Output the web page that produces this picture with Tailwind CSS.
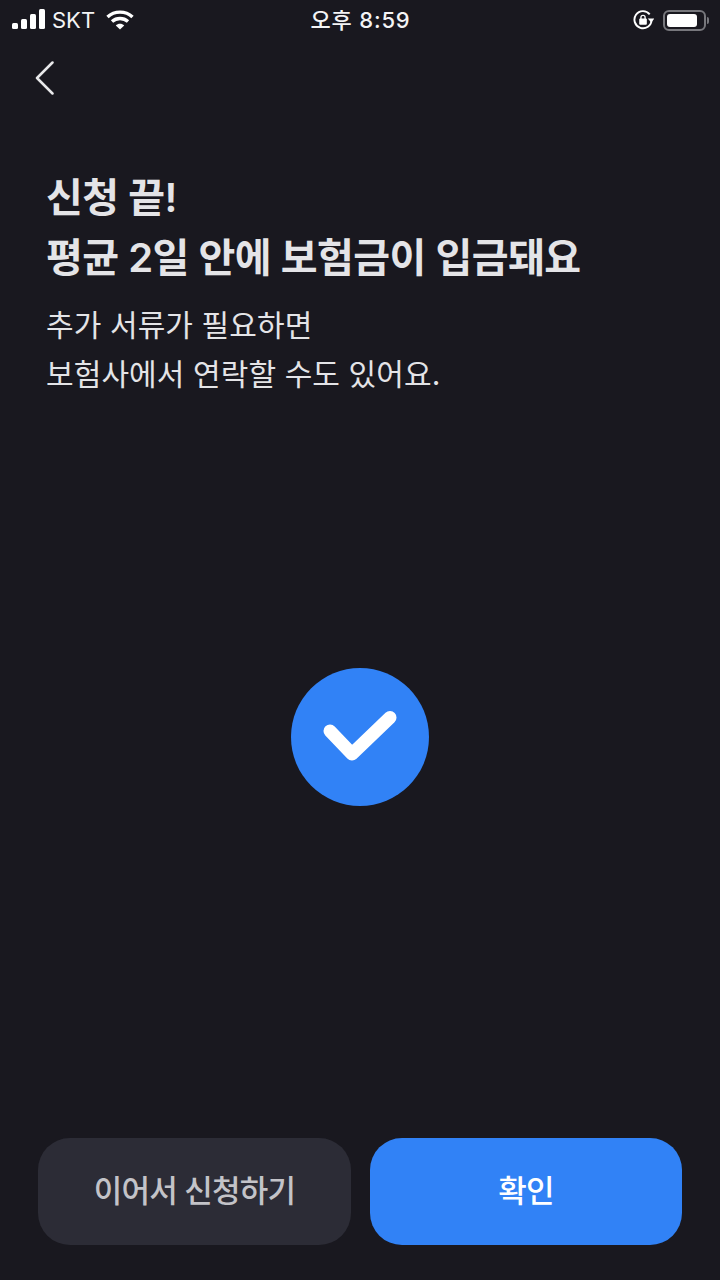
<!DOCTYPE html>
<html lang="ko">
<head>
    <meta charset="UTF-8">
    <meta name="viewport" content="width=device-width, initial-scale=1.0">
    <title>신청 끝</title>
    <script src="https://cdn.jsdelivr.net/npm/@tailwindcss/browser@4"></script>
</head>
<body class="bg-[#19181f] font-['Inter','Noto_Sans_CJK_KR',sans-serif]">
    <div class="w-[720px] h-[1280px] flex flex-col overflow-hidden">
        <!-- status bar -->
        <div class="h-[40px] shrink-0 grid grid-cols-3 items-center pl-[12px] pr-[11px] text-[#f4f4f5]">
            <div class="flex items-center">
                <svg width="33" height="22" viewBox="0 0 33 22" fill="#fff"><rect x="0" y="14" width="6" height="6" rx="1.5"/><rect x="9" y="10" width="6" height="10" rx="1.5"/><rect x="18" y="5" width="6" height="15" rx="1.5"/><rect x="27" y="0" width="6" height="20" rx="1.5"/></svg>
                <span class="ml-[7px] text-[22px] leading-none">SKT</span>
                <svg class="ml-[11px]" width="28" height="22" viewBox="0 0 28 22" fill="none" stroke="#fff" stroke-width="3.4"><path d="M1.5 8C8.500 1.500 19.500 1.500 26.500 8"/><path d="M6 12.500C10.500 8.500 17.500 8.500 22 12.500"/><path d="M14 20.500L9.800 16.400C12 14.300 16 14.300 18.200 16.400Z" fill="#fff" stroke="none"/></svg>
            </div>
            <div class="text-center text-[22px] font-medium leading-none tracking-[0.8px]">오후 8:59</div>
            <div class="flex items-center justify-end">
                <svg width="21" height="20" viewBox="0 0 22 21" fill="none"><path d="M17.500 4.500A9 9 0 1 0 19.500 10.500" stroke="#fff" stroke-width="2"/><path d="M15.500 9H22.500L19 13Z" fill="#fff"/><rect x="6.500" y="9" width="8" height="6.500" rx="1" fill="#fff"/><path d="M8.300 9.500V7.800a2.200 2.200 0 0 1 4.400 0V9.500" stroke="#fff" stroke-width="1.400"/></svg>
                <div class="ml-[9px] w-[43px] h-[21px] rounded-[6px] border-2 border-[#77777c] p-[2px]">
                    <div class="w-[30px] h-full rounded-[3px] bg-white"></div>
                </div>
                <div class="ml-[1px] w-[2px] h-[7px] rounded-r-full bg-[#77777c]"></div>
            </div>
        </div>

        <!-- back -->
        <div class="h-[74px] shrink-0 pl-[35px] pt-[21px]">
            <svg width="19" height="34" viewBox="0 0 19 34" fill="none" stroke="#e8e8ea" stroke-width="2.500" stroke-linecap="round" stroke-linejoin="round"><path d="M17.500 1.500L2 17L17.500 32.500"/></svg>
        </div>

        <!-- text -->
        <div class="shrink-0 px-[46px] pt-[54px]">
            <h1 class="text-[40px] leading-[60px] font-semibold tracking-[-0.5px] text-[#e4e4e7]">신청 끝!<br>평균 2일 안에 보험금이 입금돼요</h1>
            <p class="mt-[13px] text-[30px] leading-[49px] tracking-[0.1px] text-[#e4e4e7]">추가 서류가 필요하면<br>보험사에서 연락할 수도 있어요.</p>
        </div>

        <!-- check -->
        <div class="flex-1 flex items-center justify-center pb-[63px]">
            <div class="w-[138px] h-[138px] rounded-full bg-[#3182f6] flex items-center justify-center">
                <svg width="74" height="52" viewBox="0 0 74 52" fill="none" stroke="#fff" stroke-width="13" stroke-linecap="round" stroke-linejoin="round"><path d="M7 20L29 43L67 6.500"/></svg>
            </div>
        </div>

        <!-- buttons -->
        <div class="shrink-0 flex gap-[19px] px-[38px] pb-[35px]">
            <button class="w-[313px] h-[107px] rounded-[32px] bg-[#2c2c36] text-[31px] font-medium tracking-[-0.8px] text-[#c3c3c8]">이어서 신청하기</button>
            <button class="w-[312px] h-[107px] rounded-[32px] bg-[#3182f6] text-[31px] font-medium tracking-[-0.8px] text-white">확인</button>
        </div>
    </div>
</body>
</html>
